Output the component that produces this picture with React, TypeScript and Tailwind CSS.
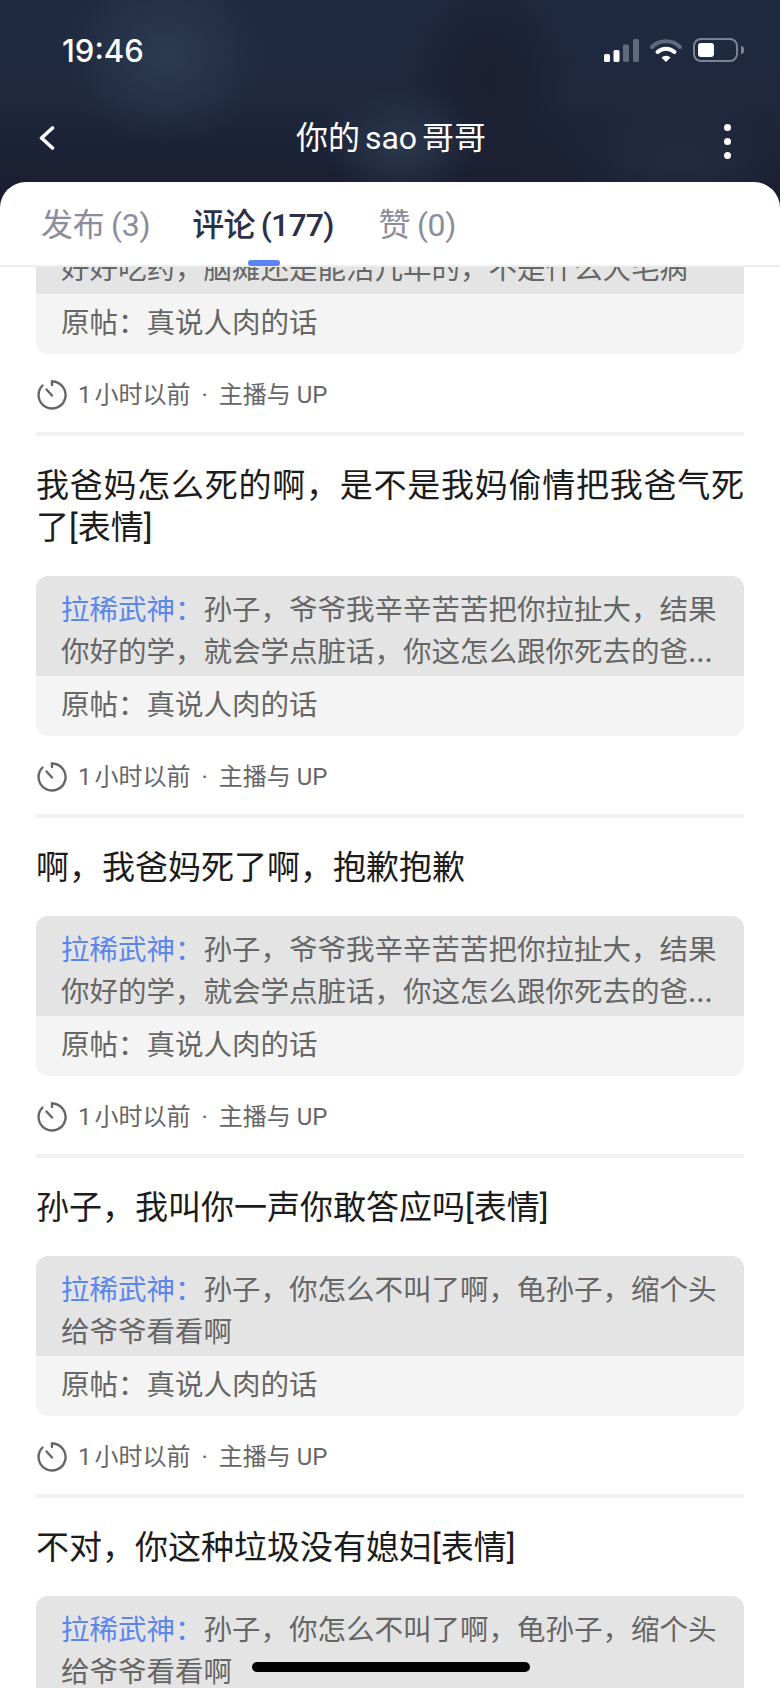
const FONT = "font-['Roboto','Noto_Sans_CJK_SC',sans-serif]";

// fullwidth punctuation, written as escapes so it can't get normalised to ascii
const COMMA = "\uFF0C";
const COLON = "\uFF1A";

type Comment = {
  title: string;
  quote: string;
};

const LONG_QUOTE = [
  "孙子",
  "爷爷我辛辛苦苦把你拉扯大",
  "结果你好的学",
  "就会学点脏话",
  "你这怎么跟你死去的爸妈交代啊",
  "你说话啊孙子",
].join(COMMA);
const SHORT_QUOTE = ["孙子", "你怎么不叫了啊", "龟孙子", "缩个头给爷爷看看啊"].join(COMMA);

const COMMENTS: Comment[] = [
  { title: `我爸妈怎么死的啊${COMMA}是不是我妈偷情把我爸气死了[表情]`, quote: LONG_QUOTE },
  { title: `啊${COMMA}我爸妈死了啊${COMMA}抱歉抱歉`, quote: LONG_QUOTE },
  { title: `孙子${COMMA}我叫你一声你敢答应吗[表情]`, quote: SHORT_QUOTE },
  { title: `不对${COMMA}你这种垃圾没有媳妇[表情]`, quote: SHORT_QUOTE },
];

export default function App() {
  return (
    <div className={`relative flex h-[1688px] w-[780px] flex-col overflow-hidden bg-[#1a1e30] ${FONT}`}>
      <Header />
      <div className="-mt-px flex min-h-0 flex-1 flex-col rounded-t-[26px] bg-white">
        <Tabs />
        <div className="min-h-0 flex-1 overflow-hidden">
          <div className="px-9">
            <div className="h-[27px] overflow-hidden bg-[#e4e4e4] px-[25px]">
              <p className="-mt-[18px] text-[28.5px] leading-[42px] text-[#666]">
                {`好好吃药${COMMA}脑瘫还是能活几年的${COMMA}不是什么大毛病`}
              </p>
            </div>
            <OriginalPost />
            <Meta />
          </div>
          {COMMENTS.map((c) => (
            <CommentItem key={c.title} comment={c} />
          ))}
        </div>
      </div>
      <div className="absolute bottom-[16px] left-[252px] h-[10px] w-[278px] rounded-full bg-black" />
    </div>
  );
}

function Header() {
  return (
    <div className="h-[183px] shrink-0 bg-[radial-gradient(ellipse_100px_90px_at_165px_55px,#2c3b53,transparent),radial-gradient(ellipse_80px_60px_at_400px_145px,#2b374d,transparent),radial-gradient(ellipse_130px_60px_at_680px_160px,#232c41,transparent),radial-gradient(ellipse_90px_120px_at_490px_80px,#1b1e30,transparent),linear-gradient(180deg,#1f2a41_0%,#1f283d_55%,#1a1e30_100%)] text-white">
      <div className="flex h-[100px] items-center justify-between pl-[62px] pr-[36px]">
        <span className="font-['Inter',sans-serif] text-[31px] font-medium leading-none">19:46</span>
        <StatusIcons />
      </div>
      <div className="relative flex h-[76px] items-center justify-center">
        <svg className="absolute left-[38px] top-[26px]" width="18" height="24" viewBox="0 0 18 24" fill="none">
          <path d="M14.5 2 3.5 12l11 10" stroke="white" strokeWidth="3.6" strokeLinecap="round" strokeLinejoin="round" />
        </svg>
        <span className="flex gap-[5px] pl-[2px] text-[32px] leading-none">
          <span>你的</span>
          <span>sao</span>
          <span>哥哥</span>
        </span>
        <div className="absolute left-[724px] top-[24px] flex flex-col gap-[7px]">
          <span className="size-[7px] rounded-full bg-white" />
          <span className="size-[7px] rounded-full bg-white" />
          <span className="size-[7px] rounded-full bg-white" />
        </div>
      </div>
    </div>
  );
}

function StatusIcons() {
  return (
    <div className="flex items-center gap-[11px]">
      <svg width="35" height="23" viewBox="0 0 35 23">
        <rect x="0" y="15" width="6" height="8" rx="1.5" fill="white" />
        <rect x="9.5" y="11" width="6" height="12" rx="1.5" fill="white" />
        <rect x="19" y="5.5" width="6" height="17.5" rx="1.5" fill="#5f6a7c" />
        <rect x="29" y="0" width="6" height="23" rx="1.5" fill="#5f6a7c" />
      </svg>
      <svg width="32" height="24" viewBox="0 0 32 24" fill="none">
        <path d="M2 9a20 20 0 0 1 28 0" stroke="#5f6a7c" strokeWidth="4" strokeLinecap="round" />
        <path d="M7.5 14a12.5 12.5 0 0 1 17 0" stroke="white" strokeWidth="4" strokeLinecap="round" />
        <path d="M11.5 19.5 16 24l4.5-4.5a6.5 6.5 0 0 0-9 0Z" fill="white" />
      </svg>
      <div className="flex items-center">
        <div className="h-[24px] w-[45px] rounded-[8px] border-2 border-[#7b8494] p-[3px]">
          <div className="h-full w-[16px] rounded-[3px] bg-white" />
        </div>
        <div className="ml-[3px] h-[8px] w-[3px] rounded-r-full bg-[#7b8494]" />
      </div>
    </div>
  );
}

function Tabs() {
  return (
    <div className="relative flex h-[85px] shrink-0 items-center gap-[42px] border-b-2 border-[#eeeeee] pl-[41px] pt-[2px] text-[32px] leading-none tracking-[-0.3px] [word-spacing:-1px]">
      <span className="text-[#8b8d9d]">发布 (3)</span>
      <span className="font-medium tracking-[-0.8px] text-[#2b3048]">评论 (177)</span>
      <span className="ml-[3px] text-[#8b8d9d]">赞 (0)</span>
      <div className="absolute left-[248px] top-[78px] h-[6px] w-[32px] rounded-full bg-[#5b83f5]" />
    </div>
  );
}

function CommentItem({ comment }: { comment: Comment }) {
  return (
    <div className="px-9">
      <div className="h-1 bg-[#f1f1f1]" />
      <p className="pt-[29px] pb-[27px] text-justify text-[33px] leading-[42px] text-[#1c1c1c]">{comment.title}</p>
      <div className="h-[100px] overflow-hidden rounded-t-[12px] bg-[#e4e4e4] px-[25px] pt-[13px]">
        <p className="line-clamp-2 font-['Inter','Noto_Sans_CJK_SC',sans-serif] text-[28.5px] leading-[42px] text-[#666]">
          <span className="text-[#5b86ee]">拉稀武神{COLON}</span>
          {comment.quote}
        </p>
      </div>
      <OriginalPost />
      <Meta />
    </div>
  );
}

function OriginalPost() {
  return (
    <div className="flex h-[60px] items-center rounded-b-[12px] bg-[#f4f4f4] px-[25px] text-[28.5px] text-[#666]">
      原帖{COLON}真说人肉的话
    </div>
  );
}

function Meta() {
  return (
    <div className="h-[78px] pt-[25px]">
      <div className="flex items-center gap-[10px] text-[24px] leading-[30px] text-[#666]">
        <ClockIcon />
        <span>
          1<span className="ml-[3px]">小时以前</span>
          <span className="mx-[11px]">·</span>
          主播与 UP
        </span>
      </div>
    </div>
  );
}

function ClockIcon() {
  return (
    <svg className="shrink-0" width="32" height="32" viewBox="0 0 32 32" fill="none">
      <path
        d="M16 2.5A13.5 13.5 0 1 1 6.5 6.5"
        stroke="#666"
        strokeWidth="2.4"
        strokeLinecap="round"
      />
      <path d="M16 2.5V6M10.5 10.5l5.5 6" stroke="#666" strokeWidth="2.4" strokeLinecap="round" />
    </svg>
  );
}
